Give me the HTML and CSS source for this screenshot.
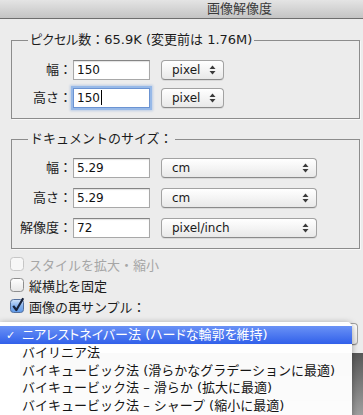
FILE: index.html
```html
<!DOCTYPE html>
<html>
<head>
  <meta charset="utf-8">
  <title>画像解像度</title>
  <link rel="stylesheet" href="styles.css">
</head>
<body>

  <div class="titlebar">画像解像度</div>

  <fieldset class="group">
    <legend><span class="prop">ピクセル数</span>：65.9K (変更前は 1.76M)</legend>
    <div class="rows tight">
      <div class="row">
        <span class="lbl">幅：</span>
        <span class="field">150</span>
        <span class="popup short">pixel
          <svg class="arrows" width="7" height="10" viewBox="0 0 7 10"><polygon points="0.5,4 3.5,0.5 6.5,4"/><polygon points="0.5,6 3.5,9.5 6.5,6"/></svg>
        </span>
      </div>
      <div class="row">
        <span class="lbl">高さ：</span>
        <span class="field focus">150<span class="caret"></span></span>
        <span class="popup short">pixel
          <svg class="arrows" width="7" height="10" viewBox="0 0 7 10"><polygon points="0.5,4 3.5,0.5 6.5,4"/><polygon points="0.5,6 3.5,9.5 6.5,6"/></svg>
        </span>
      </div>
    </div>
  </fieldset>

  <fieldset class="group second">
    <legend>ドキュメントのサイズ：</legend>
    <div class="rows">
      <div class="row">
        <span class="lbl">幅：</span>
        <span class="field">5.29</span>
        <span class="popup wide">cm
          <svg class="arrows" width="7" height="10" viewBox="0 0 7 10"><polygon points="0.5,4 3.5,0.5 6.5,4"/><polygon points="0.5,6 3.5,9.5 6.5,6"/></svg>
        </span>
      </div>
      <div class="row">
        <span class="lbl">高さ：</span>
        <span class="field">5.29</span>
        <span class="popup wide">cm
          <svg class="arrows" width="7" height="10" viewBox="0 0 7 10"><polygon points="0.5,4 3.5,0.5 6.5,4"/><polygon points="0.5,6 3.5,9.5 6.5,6"/></svg>
        </span>
      </div>
      <div class="row">
        <span class="lbl">解像度：</span>
        <span class="field">72</span>
        <span class="popup wide">pixel/inch
          <svg class="arrows" width="7" height="10" viewBox="0 0 7 10"><polygon points="0.5,4 3.5,0.5 6.5,4"/><polygon points="0.5,6 3.5,9.5 6.5,6"/></svg>
        </span>
      </div>
    </div>
  </fieldset>

  <div class="checks">
    <div class="check disabled">
      <svg width="15" height="16" viewBox="0 0 15 16"><rect x="0.5" y="2.5" width="13" height="13" rx="3" fill="#f7f7f7" stroke="#c6c6c6"/></svg>
      スタイルを拡大・縮小
    </div>
    <div class="check">
      <svg width="15" height="16" viewBox="0 0 15 16">
        <defs><linearGradient id="off" x1="0" y1="0" x2="0" y2="1"><stop offset="0" stop-color="#ffffff"/><stop offset="1" stop-color="#e6e6e6"/></linearGradient></defs>
        <rect x="0.5" y="2.5" width="13" height="13" rx="3" fill="url(#off)" stroke="#8e8e8e"/>
      </svg>
      縦横比を固定
    </div>
    <div class="check">
      <svg width="15" height="16" viewBox="0 0 15 16">
        <defs><linearGradient id="on" x1="0" y1="0" x2="0" y2="1"><stop offset="0" stop-color="#d2e4fa"/><stop offset="0.5" stop-color="#86b2ee"/><stop offset="1" stop-color="#5d98e8"/></linearGradient></defs>
        <rect x="0.5" y="2.5" width="13" height="13" rx="3" fill="url(#on)" stroke="#55709c"/>
        <path d="M3.2 8.8 L6.4 13 L13.2 1.2" fill="none" stroke="#17223a" stroke-width="2.2" stroke-linejoin="round"/>
      </svg>
      画像の再サンプル：
    </div>
  </div>

  <!-- popup del remuestreo y vista previa, casi tapados por el menu -->
  <div class="popup method"></div>
  <div class="preview"></div>

  <div class="menu">
    <div class="item selected"><span class="tick">✓</span><span class="prop">ニアレストネイバー法 (ハードな輪郭を維持)</span></div>
    <div class="item"><span class="tick"></span>バイリニア法</div>
    <div class="item"><span class="tick"></span>バイキュービック法 (滑らかなグラデーションに最適)</div>
    <div class="item"><span class="tick"></span>バイキュービック法 – 滑らか (拡大に最適)</div>
    <div class="item"><span class="tick"></span>バイキュービック法 – シャープ (縮小に最適)</div>
  </div>

</body>
</html>
```

FILE: styles.css
```css
body {
  margin: 0;
  height: 415px;
  overflow: hidden;
  position: relative;
  background-color: #ececec; /* gris de dialogo */
  font-family: "DejaVu Sans", "Noto Sans CJK JP", sans-serif;
  font-size: 13px;
  color: #1c1c1c;
}

/* kana proporcional donde el original es mas estrecho */
.prop {
  font-feature-settings: "palt";
}

.titlebar {
  height: 18px;
  line-height: 18px;
  padding-left: 207px;
  border-bottom: 1px solid #6e6e6e;
  background: linear-gradient(#e4e4e4, #c4c4c4);
  color: #3a3a3a;
}

.group {
  margin: 13px 3px 0 11px;
  padding: 0 0 10px;
  border: 1px solid #8c8c8c;
  box-shadow: 1px 1px 0 #f8f8f8;
  min-width: 0;
}

.group.second {
  margin-top: 12px;
}

.group legend {
  margin-left: 16px;
  padding: 0 2px;
  line-height: 16px;
}

.rows {
  display: flex;
  flex-direction: column;
  gap: 10px;
  padding-top: 11px;
}

.rows.tight {
  gap: 8px;
  padding-top: 12px;
}

.row {
  display: flex;
  align-items: center;
  height: 20px;
  line-height: 20px;
}

.lbl {
  width: 60px;
  margin-right: 1px;
  text-align: right;
}

.field {
  box-sizing: border-box;
  width: 77px;
  height: 20px;
  padding-left: 3px;
  border: 1px solid #a8a8a8;
  border-top-color: #858585;
  background-color: #fff;
  box-shadow: inset 0 1px 1px rgba(0, 0, 0, 0.12);
  font-size: 12px;
  line-height: 18px;
  color: #111;
}

.field.focus {
  border-color: #6b93d2;
  box-shadow: 0 0 0 2px #97b9e8, 0 0 2px 3px rgba(120, 160, 220, 0.4);
}

.caret {
  display: inline-block;
  width: 1px;
  height: 15px;
  margin-left: 1px;
  vertical-align: -3px;
  background-color: #000;
}

.popup {
  box-sizing: border-box;
  display: flex;
  align-items: center;
  justify-content: space-between;
  height: 20px;
  margin-left: 11px;
  padding: 0 7px 0 10px;
  border: 1px solid #a2a2a2;
  border-bottom-color: #8a8a8a;
  border-radius: 4px;
  background: linear-gradient(#ffffff, #f4f4f4 50%, #e8e8e8);
  box-shadow: 0 1px 0 rgba(0, 0, 0, 0.08);
  font-size: 12px;
  color: #1a1a1a;
}

.popup.short {
  width: 63px;
}

.popup.wide {
  width: 156px;
}

.arrows {
  fill: #3a3a3a;
}

.checks {
  margin: 5px 0 0 10px;
}

.check {
  display: flex;
  align-items: center;
  gap: 4px;
  height: 21px;
}

.check svg {
  margin-top: -3px;
}

.check.disabled {
  color: #a6a6a6;
}

.popup.method {
  margin: 6px 5px 0 20px;
  height: 22px;
}

.preview {
  height: 70px;
  margin: 8px 0 0 20px;
  background: linear-gradient(#575757, #a8a8a8);
}

/* menu desplegable abierto encima del dialogo */
.menu {
  position: absolute;
  top: 322px;
  left: 0;
  width: 352px;
  height: 110px;
  padding-top: 4px;
  border-radius: 0 5px 0 0;
  background-color: rgba(255, 255, 255, 0.97);
  box-shadow: 0 1px 6px rgba(0, 0, 0, 0.35);
}

.item {
  height: 17.5px;
  line-height: 17.5px;
  padding-left: 6px;
  white-space: nowrap;
  color: #151515;
}

.item.selected {
  height: 18px;
  line-height: 18px;
  background: linear-gradient(#6a92f6, #3160ea);
  color: #fff;
}

.tick {
  display: inline-block;
  width: 16px;
  font-size: 11px;
}
```
